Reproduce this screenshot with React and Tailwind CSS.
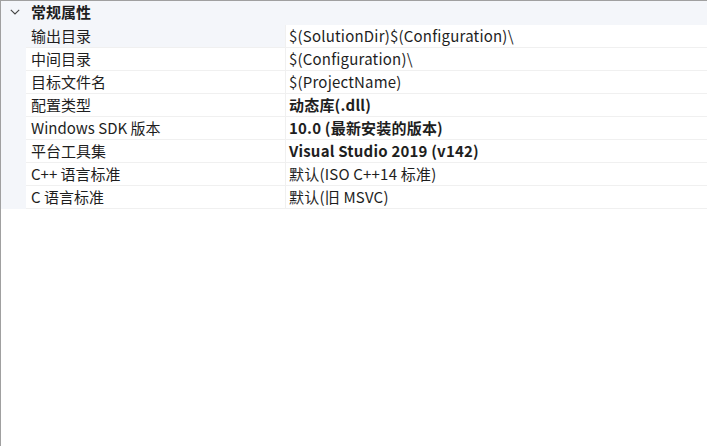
import React from "react";

const rows = [
  ["输出目录", "$(SolutionDir)$(Configuration)\\", false],
  ["中间目录", "$(Configuration)\\", false],
  ["目标文件名", "$(ProjectName)", false],
  ["配置类型", "动态库(.dll)", true],
  ["Windows SDK 版本", "10.0 (最新安装的版本)", true],
  ["平台工具集", "Visual Studio 2019 (v142)", true],
  ["C++ 语言标准", "默认(ISO C++14 标准)", false],
  ["C 语言标准", "默认(旧 MSVC)", false],
];

export default function App() {
  return (
    <div
      className="w-[707px] h-[446px] bg-white border-l border-t border-[#a0a0a0] overflow-hidden text-[15px] text-[#1e1e1e]"
      style={{ fontFamily: '"Noto Sans CJK SC", sans-serif' }}
    >
      <div className="h-[24px] bg-[#f4f6fa] flex items-center pb-[3px]">
        <div className="w-[25px] flex justify-center pl-[3px]">
          <svg width="10" height="6" viewBox="0 0 10 6" fill="none">
            <path d="M0.8 0.8 L5 5 L9.2 0.8" stroke="#444" strokeWidth="1.1" />
          </svg>
        </div>
        <div className="pl-[5px] font-bold leading-none">常规属性</div>
      </div>
      <div className="flex">
        <div className="w-[25px] bg-[#f4f6fa]" />
        <div className="flex-1">
          {rows.map(([k, v, b], i) => (
            <div key={i} className="flex h-[23px] border-b border-[#f0f0f0]">
              <div
                className={`w-[259px] pl-[5px] pb-[2px] flex items-center leading-none ${i === 0 ? "bg-[#f4f6fa]" : ""}`}
              >
                {k}
              </div>
              <div className="w-px bg-[#f0f0f0]" />
              <div className={`flex-1 pl-[3px] pb-[2px] flex items-center leading-none tracking-[0.2px] ${b ? "font-bold" : ""}`}>
                {v}
              </div>
            </div>
          ))}
        </div>
      </div>
    </div>
  );
}
